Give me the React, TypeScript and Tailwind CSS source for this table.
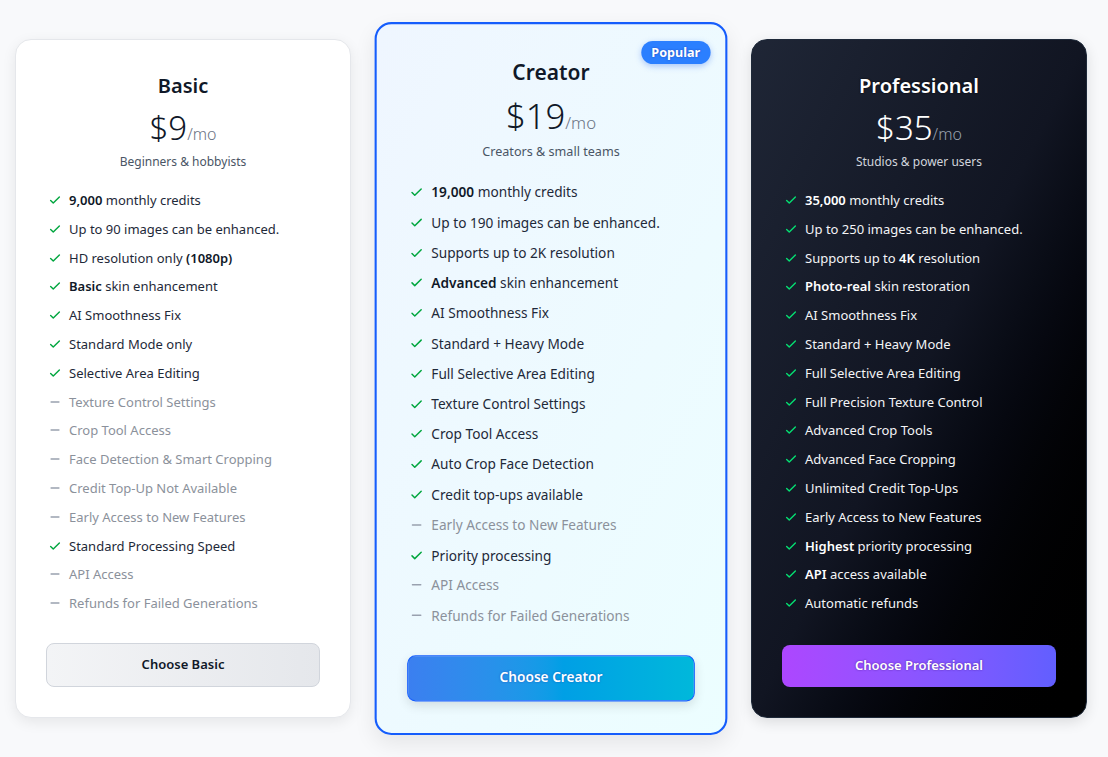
import React from "react";

type Feature = { on: boolean; bold?: string; text: string; boldAfter?: string; after?: string };

const basic: Feature[] = [
  { on: true, bold: "9,000", text: " monthly credits" },
  { on: true, text: "Up to 90 images can be enhanced." },
  { on: true, text: "HD resolution only ", boldAfter: "(1080p)" },
  { on: true, bold: "Basic", text: " skin enhancement" },
  { on: true, text: "AI Smoothness Fix" },
  { on: true, text: "Standard Mode only" },
  { on: true, text: "Selective Area Editing" },
  { on: false, text: "Texture Control Settings" },
  { on: false, text: "Crop Tool Access" },
  { on: false, text: "Face Detection & Smart Cropping" },
  { on: false, text: "Credit Top-Up Not Available" },
  { on: false, text: "Early Access to New Features" },
  { on: true, text: "Standard Processing Speed" },
  { on: false, text: "API Access" },
  { on: false, text: "Refunds for Failed Generations" },
];

const creator: Feature[] = [
  { on: true, bold: "19,000", text: " monthly credits" },
  { on: true, text: "Up to 190 images can be enhanced." },
  { on: true, text: "Supports up to 2K resolution" },
  { on: true, bold: "Advanced", text: " skin enhancement" },
  { on: true, text: "AI Smoothness Fix" },
  { on: true, text: "Standard + Heavy Mode" },
  { on: true, text: "Full Selective Area Editing" },
  { on: true, text: "Texture Control Settings" },
  { on: true, text: "Crop Tool Access" },
  { on: true, text: "Auto Crop Face Detection" },
  { on: true, text: "Credit top-ups available" },
  { on: false, text: "Early Access to New Features" },
  { on: true, text: "Priority processing" },
  { on: false, text: "API Access" },
  { on: false, text: "Refunds for Failed Generations" },
];

const pro: Feature[] = [
  { on: true, bold: "35,000", text: " monthly credits" },
  { on: true, text: "Up to 250 images can be enhanced." },
  { on: true, text: "Supports up to ", boldAfter: "4K", after: " resolution" },
  { on: true, bold: "Photo-real", text: " skin restoration" },
  { on: true, text: "AI Smoothness Fix" },
  { on: true, text: "Standard + Heavy Mode" },
  { on: true, text: "Full Selective Area Editing" },
  { on: true, text: "Full Precision Texture Control" },
  { on: true, text: "Advanced Crop Tools" },
  { on: true, text: "Advanced Face Cropping" },
  { on: true, text: "Unlimited Credit Top-Ups" },
  { on: true, text: "Early Access to New Features" },
  { on: true, bold: "Highest", text: " priority processing" },
  { on: true, bold: "API", text: " access available" },
  { on: true, text: "Automatic refunds" },
];

function CheckIcon({ className }: { className: string }) {
  return (
    <svg viewBox="0 0 16 16" className={className} fill="none" stroke="currentColor" strokeWidth="1.6" strokeLinecap="round" strokeLinejoin="round">
      <path d="M3 8.5l3 3 7-7" />
    </svg>
  );
}

function DashIcon({ className }: { className: string }) {
  return (
    <svg viewBox="0 0 16 16" className={className} fill="none" stroke="currentColor" strokeWidth="1.6" strokeLinecap="round">
      <path d="M3.5 8h9" />
    </svg>
  );
}

function FeatureList({ items, dark }: { items: Feature[]; dark?: boolean }) {
  return (
    <ul className="mt-5 flex flex-col gap-[8.8px] pl-[2px]">
      {items.map((f, i) => (
        <li key={i} className="flex items-center gap-[7px] text-[13px] leading-5">
          {f.on ? (
            <CheckIcon className={`h-[14px] w-[14px] shrink-0 ${dark ? "text-green-400" : "text-green-600"}`} />
          ) : (
            <DashIcon className="h-[14px] w-[14px] shrink-0 text-gray-400" />
          )}
          <span className={f.on ? (dark ? "text-gray-100" : "text-gray-800") : "text-[#8b919b]"}>
            {f.bold && <span className={`font-semibold ${dark ? "text-white" : "text-gray-900"}`}>{f.bold}</span>}
            {f.text}
            {f.boldAfter && <span className={`font-semibold ${dark ? "text-white" : "text-gray-900"}`}>{f.boldAfter}</span>}
            {f.after}
          </span>
        </li>
      ))}
    </ul>
  );
}

export default function App() {
  return (
    <div
      className="flex h-[757px] w-[1108px] items-center bg-[#f8f9fb] pl-[15px]"
      style={{ fontFamily: '"Noto Sans", "Open Sans", sans-serif' }}
    >
      <div className="flex gap-8">
        {/* Basic */}
        <div className="flex h-[679px] w-[336px] flex-col rounded-2xl border border-gray-200 bg-white px-[30px] pt-8 pb-[30px] shadow-[0_4px_14px_rgba(0,0,0,0.08)]">
          <div className="text-center text-xl leading-7 font-semibold text-gray-900">Basic</div>
          <div className="mt-2 text-center leading-10">
            <span className="text-[33px] font-light text-gray-900">$9</span>
            <span className="text-base font-light text-gray-500">/mo</span>
          </div>
          <div className="text-center text-xs leading-4 text-gray-600">Beginners &amp; hobbyists</div>
          <FeatureList items={basic} />
          <button className="mt-auto h-[44px] w-full rounded-lg border border-gray-300 bg-gradient-to-r from-gray-100 to-gray-200 text-[13px] font-semibold text-gray-900">
            Choose Basic
          </button>
        </div>

        {/* Creator */}
        <div className="relative flex h-[679px] w-[336px] scale-105 flex-col rounded-2xl border-2 border-blue-600 bg-gradient-to-br from-blue-50 to-cyan-50 px-[29px] pt-8 pb-[30px] shadow-[0_8px_20px_rgba(0,0,0,0.08)]">
          <span className="absolute top-4 right-[14px] rounded-full bg-blue-500 px-[10px] py-[3px] text-xs leading-4 font-bold text-white shadow-[0_2px_6px_rgba(37,99,235,0.35)] [text-shadow:0_0_2px_rgba(30,64,175,0.9)]">
            Popular
          </span>
          <div className="text-center text-xl leading-7 font-semibold text-gray-900">Creator</div>
          <div className="mt-2 text-center leading-10">
            <span className="text-[33px] font-light text-gray-900">$19</span>
            <span className="text-base font-light text-gray-500">/mo</span>
          </div>
          <div className="text-center text-xs leading-4 text-gray-600">Creators &amp; small teams</div>
          <FeatureList items={creator} />
          <button className="mt-auto h-[44px] w-full rounded-lg border border-blue-600 bg-gradient-to-r from-[#3b7ff0] to-cyan-500 text-[13px] font-semibold text-white shadow-[0_4px_10px_rgba(0,0,0,0.12)] [text-shadow:0_0_2px_rgba(30,64,175,0.7)]">
            Choose Creator
          </button>
        </div>

        {/* Professional */}
        <div className="flex h-[679px] w-[336px] flex-col rounded-2xl border border-gray-800 bg-gradient-to-br from-[#1f2636] via-[#111522] to-black px-[30px] pt-8 pb-[30px] shadow-[0_4px_14px_rgba(0,0,0,0.12)]">
          <div className="text-center text-xl leading-7 font-semibold text-white [text-shadow:0_0_2px_rgba(0,0,0,0.9)]">Professional</div>
          <div className="mt-2 text-center leading-10">
            <span className="text-[33px] font-light text-white">$35</span>
            <span className="text-base font-light text-gray-400">/mo</span>
          </div>
          <div className="text-center text-xs leading-4 text-gray-300">Studios &amp; power users</div>
          <FeatureList items={pro} dark />
          <button className="mt-auto h-[42px] w-full rounded-lg bg-gradient-to-r from-purple-500 to-indigo-500 text-[13px] font-semibold text-white [text-shadow:0_0_2px_rgba(76,29,149,0.9)]">
            Choose Professional
          </button>
        </div>
      </div>
    </div>
  );
}
